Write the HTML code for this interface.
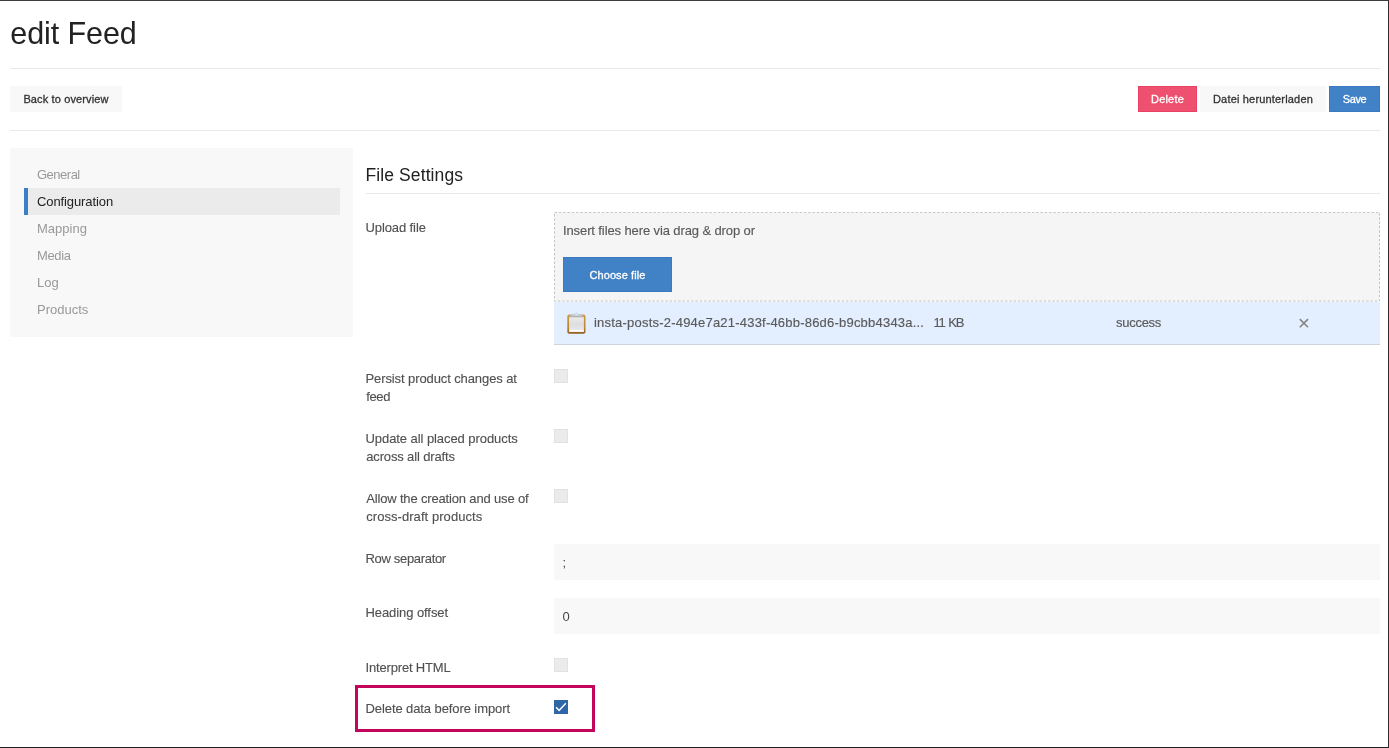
<!DOCTYPE html>
<html lang="en">
<head>
<meta charset="utf-8">
<title>edit Feed</title>
<style>
  * { box-sizing: border-box; margin: 0; padding: 0; }
  html, body { width: 1389px; height: 748px; overflow: hidden; background: #fff; }
  body { will-change: transform; font-family: "Liberation Sans", sans-serif; color: #333; position: relative; }
  .frame { position: absolute; left: 0; top: 0; width: 1389px; height: 748px; border-top: 1px solid #3c3c3c; border-right: 1px solid #303030; border-bottom: 1px solid #222; pointer-events: none; z-index: 10; }
  .abs { position: absolute; white-space: nowrap; }
  h1 { position: absolute; left: 10.3px; top: 13px; font-size: 30.5px; letter-spacing: -0.08px; font-weight: 400; color: #222; line-height: 40px; white-space: nowrap; }
  .hr { position: absolute; height: 1px; background: #e8e8e8; }
  .btn { -webkit-text-stroke: 0.3px currentColor; position: absolute; height: 26px; line-height: 26px; font-size: 11px; text-align: center; white-space: nowrap; }
  .btn.light { background: #f8f8f8; color: #333; }
  .btn.red { background: #ee506f; color: #fff; box-shadow: inset 0 0 0 1px #ea4163; }
  .btn.blue { background: #4182c6; color: #fff; box-shadow: inset 0 0 0 1px #3b7ac1; }
  .side { position: absolute; left: 10px; top: 148px; width: 343px; height: 189px; background: #f8f8f8; }
  .nav { position: absolute; left: 37px; font-size: 13px; color: #999; line-height: 27px; height: 27px; white-space: nowrap; }
  .navact { position: absolute; left: 23.5px; top: 188px; width: 316.5px; height: 27px; background: #ebebeb; border-left: 4.5px solid #3d7fc4; }
  .nav.on { color: #222; }
  h2 { position: absolute; left: 365.5px; top: 162px; font-size: 17.5px; letter-spacing: 0.1px; font-weight: 400; color: #222; line-height: 26px; white-space: nowrap; }
  .lbl { position: absolute; left: 365.5px; font-size: 13px; color: #505050; -webkit-text-stroke: 0.12px currentColor; line-height: 18px; white-space: nowrap; }
  .drop { position: absolute; left: 554px; top: 212px; width: 827px; height: 90px; background: #f5f5f5; border: 1px dashed #c8c8c8; }
  .filerow { position: absolute; left: 554px; top: 302px; width: 826px; height: 43px; background: #e3eeff; border-bottom: 1px solid #ccd3dd; }
  .txt { position: absolute; font-size: 13px; color: #5a5a5a; -webkit-text-stroke: 0.15px currentColor; line-height: 18px; white-space: nowrap; }
  .cb { position: absolute; left: 554px; width: 14px; height: 14px; background: #ebebeb; border: 1px solid #e2e2e2; }
  .cb.on { background: #2f66a8; border-color: #2f66a8; }
  .inp { position: absolute; left: 554px; width: 826px; height: 36px; background: #f8f8f8; font-size: 13px; color: #444; line-height: 38px; padding-left: 8.5px; }
  .hl { position: absolute; left: 355px; top: 685px; width: 240px; height: 47px; border: 3px solid #c4055c; }
</style>
</head>
<body>
  <h1 id="t_title">edit Feed</h1>
  <div class="hr" style="left:10px;top:68px;width:1370px"></div>
  <div class="btn light" style="left:10px;top:86px;width:112px;letter-spacing:0.13px" id="t_back">Back to overview</div>
  <div class="btn red" style="left:1138px;top:86px;width:59px;letter-spacing:0.18px" id="t_delete">Delete</div>
  <div class="btn light" style="left:1200px;top:86px;width:126px;letter-spacing:0.18px" id="t_datei">Datei herunterladen</div>
  <div class="btn blue" style="left:1329px;top:86px;width:51px;letter-spacing:-0.45px" id="t_save">Save</div>
  <div class="hr" style="left:10px;top:130px;width:1370px"></div>

  <div class="side"></div>
  <div class="navact"></div>
  <div class="nav" style="top:161px;letter-spacing:-0.5px" id="t_general">General</div>
  <div class="nav on" style="top:188px;letter-spacing:-0.1px" id="t_config">Configuration</div>
  <div class="nav" style="top:215px" id="t_mapping">Mapping</div>
  <div class="nav" style="top:242px;letter-spacing:-0.37px" id="t_media">Media</div>
  <div class="nav" style="top:269px" id="t_log">Log</div>
  <div class="nav" style="top:296px" id="t_products">Products</div>

  <h2 id="t_h2">File Settings</h2>
  <div class="hr" style="left:366px;top:193px;width:1014px"></div>

  <div class="lbl" style="top:219px;letter-spacing:-0.1px" id="t_upload">Upload file</div>
  <svg class="abs" style="left:554px;top:212px" width="826" height="90" viewBox="0 0 826 90"><rect x="0.5" y="0.4" width="825" height="88.7" fill="#f5f5f5" stroke="#c2c2c2" stroke-width="1" stroke-dasharray="2.5 1.8"/></svg>
  <div class="txt" style="left:563px;top:222px;letter-spacing:-0.11px" id="t_insert">Insert files here via drag &amp; drop or</div>
  <div class="btn blue" style="left:563px;top:257px;width:109px;height:35px;line-height:37px;letter-spacing:0.1px" id="t_choose">Choose file</div>
  <div class="filerow"></div>
  <svg class="abs" style="left:560px;top:306px" width="36" height="34" viewBox="560 306 36 34">
    <defs><linearGradient id="brd" x1="0" y1="0" x2="0" y2="1"><stop offset="0" stop-color="#cc9a45"/><stop offset="0.7" stop-color="#b98631"/><stop offset="1" stop-color="#8c5f1f"/></linearGradient>
    <linearGradient id="ppr" x1="0" y1="0" x2="0" y2="1"><stop offset="0" stop-color="#d4d4d4"/><stop offset="0.12" stop-color="#e9e9e9"/><stop offset="0.5" stop-color="#dedede"/><stop offset="0.84" stop-color="#e6e6e6"/><stop offset="0.9" stop-color="#ffffff"/><stop offset="1" stop-color="#ffffff"/></linearGradient></defs>
    <rect x="567.3" y="314.5" width="18.2" height="19.2" rx="2" fill="url(#brd)"/>
    <rect x="569.1" y="316.6" width="14.8" height="15.3" fill="url(#ppr)"/>
    <rect x="570.4" y="314.5" width="12" height="2.4" fill="#c4c7cc"/>
    <path d="M573.4 315.3 L576.4 312.5 L579.4 315.3 Z" fill="#c0d3ec"/>
    <path d="M575.5 315.2 L576.4 313.9 L577.3 315.2 Z" fill="#ffffff"/><rect x="569.1" y="316.4" width="14.8" height="0.7" fill="#a9a9a9"/>
  </svg>
  <div class="txt" style="left:594px;top:314px;letter-spacing:0.21px" id="t_insta">insta-posts-2-494e7a21-433f-46bb-86d6-b9cbb4343a...</div>
  <div class="txt" style="left:933.5px;top:314px" id="t_kb"><span style="letter-spacing:-2.2px">1</span>1<span style="letter-spacing:-1.1px"> K</span>B</div>
  <div class="txt" style="left:1116px;top:314px;letter-spacing:-0.27px" id="t_success">success</div>
  <svg class="abs" style="left:1298px;top:317px" width="12" height="12" viewBox="0 0 12 12"><path d="M1.8 2.1 L10 10.3 M10 2.1 L1.8 10.3" stroke="#858585" stroke-width="1.6" fill="none"/></svg>

  <div class="lbl" style="top:370px" id="t_persist"><span style="letter-spacing:-0.1px">Persist product changes at</span><br><span style="margin-left:0.7px;letter-spacing:-0.33px">feed</span></div>
  <div class="cb" style="top:369px"></div>
  <div class="lbl" style="top:430px" id="t_update"><span style="letter-spacing:-0.07px">Update all placed products</span><br><span style="margin-left:0.7px;letter-spacing:-0.14px">across all drafts</span></div>
  <div class="cb" style="top:429px"></div>
  <div class="lbl" style="top:490px" id="t_allow"><span style="margin-left:0.7px;letter-spacing:-0.16px">Allow the creation and use of</span><br><span style="margin-left:0.7px;letter-spacing:0.06px">cross-draft products</span></div>
  <div class="cb" style="top:489px"></div>

  <div class="lbl" style="top:550px;letter-spacing:-0.32px" id="t_rowsep">Row separator</div>
  <div class="inp" style="top:544px" id="t_semi">;</div>
  <div class="lbl" style="top:604px;letter-spacing:-0.08px" id="t_heading">Heading offset</div>
  <div class="inp" style="top:598px" id="t_zero">0</div>

  <div class="lbl" style="top:659px;letter-spacing:-0.17px" id="t_interp">Interpret HTML</div>
  <div class="cb" style="top:658px"></div>
  <div class="lbl" style="top:700px;letter-spacing:-0.09px" id="t_deldata">Delete data before import</div>
  <div class="cb on" style="top:700px"></div>
  <svg class="abs" style="left:554px;top:700px" width="14" height="14" viewBox="0 0 14 14"><path d="M2.1 7.2 L5.1 10.4 L11.8 3.3" stroke="#fff" stroke-width="1.5" fill="none"/></svg>
  <div class="hl"></div>

  <div class="frame"></div>
</body>
</html>
